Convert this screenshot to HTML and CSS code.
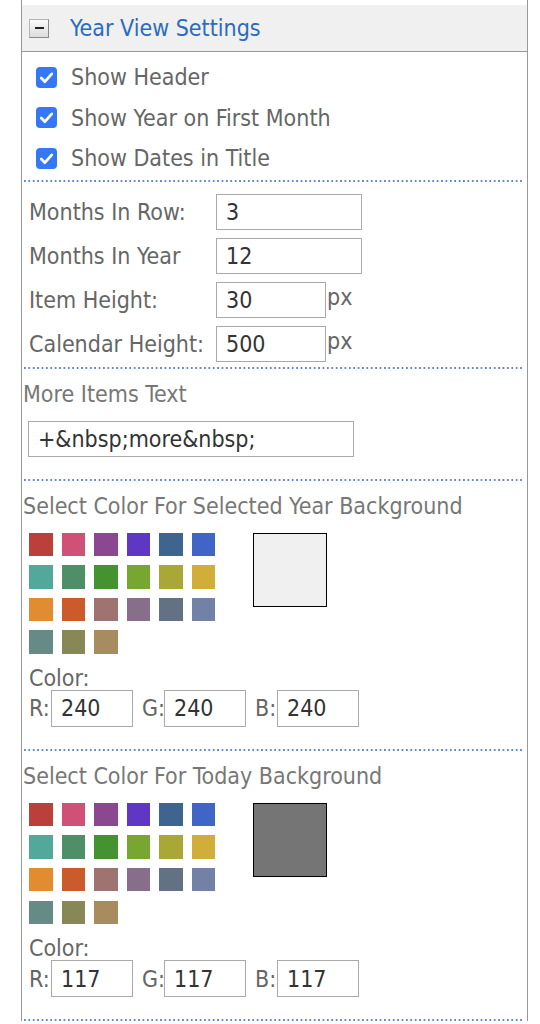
FILE: index.html
```html
<!DOCTYPE html>
<html>
<head>
    <title>Year View Settings</title>
    <link rel="stylesheet" href="styles.css">
</head>
<body>
<div class="panel">
    <div class="header">
        <span class="toggle"><span class="minus"></span></span>
        <span class="title">Year View Settings</span>
    </div>

    <div class="checks">
        <label class="check-row">
            <span class="checkbox"><svg viewBox="0 0 20 20" width="21" height="21"><path d="M5 10.5 L8.5 14 L15 6.5" fill="none" stroke="#fff" stroke-width="2.6" stroke-linecap="round" stroke-linejoin="round"/></svg></span>
            Show Header
        </label>
        <label class="check-row">
            <span class="checkbox"><svg viewBox="0 0 20 20" width="21" height="21"><path d="M5 10.5 L8.5 14 L15 6.5" fill="none" stroke="#fff" stroke-width="2.6" stroke-linecap="round" stroke-linejoin="round"/></svg></span>
            Show Year on First Month
        </label>
        <label class="check-row">
            <span class="checkbox"><svg viewBox="0 0 20 20" width="21" height="21"><path d="M5 10.5 L8.5 14 L15 6.5" fill="none" stroke="#fff" stroke-width="2.6" stroke-linecap="round" stroke-linejoin="round"/></svg></span>
            Show Dates in Title
        </label>
    </div>
    <div class="sep"></div>

    <div class="form">
        <div class="label">Months In Row:</div>
        <div><input class="text wide" type="text" value="3"></div>
        <div class="label">Months In Year</div>
        <div><input class="text wide" type="text" value="12"></div>
        <div class="label">Item Height:</div>
        <div class="with-unit"><input class="text short" type="text" value="30"><span class="unit">px</span></div>
        <div class="label">Calendar Height:</div>
        <div class="with-unit"><input class="text short" type="text" value="500"><span class="unit">px</span></div>
    </div>
    <div class="sep"></div>

    <div class="section">
        <div class="section-title">More Items Text</div>
        <input class="text more" type="text" value="+&amp;nbsp;more&amp;nbsp;">
    </div>
    <div class="sep"></div>

    <div class="section">
        <div class="section-title">Select Color For Selected Year Background</div>
        <div class="picker">
            <div class="swatches">
                <span class="sw c1"></span><span class="sw c2"></span><span class="sw c3"></span><span class="sw c4"></span><span class="sw c5"></span><span class="sw c6"></span>
                <span class="sw c7"></span><span class="sw c8"></span><span class="sw c9"></span><span class="sw c10"></span><span class="sw c11"></span><span class="sw c12"></span>
                <span class="sw c13"></span><span class="sw c14"></span><span class="sw c15"></span><span class="sw c16"></span><span class="sw c17"></span><span class="sw c18"></span>
                <span class="sw c19"></span><span class="sw c20"></span><span class="sw c21"></span>
            </div>
            <div class="preview" style="background: rgb(240,240,240)"></div>
        </div>
        <div class="color-label">Color:</div>
        <div class="rgb">
            <span class="ch">R:</span><input class="text num" type="text" value="240">
            <span class="ch">G:</span><input class="text num" type="text" value="240">
            <span class="ch">B:</span><input class="text num" type="text" value="240">
        </div>
    </div>
    <div class="sep"></div>

    <div class="section">
        <div class="section-title">Select Color For Today Background</div>
        <div class="picker">
            <div class="swatches">
                <span class="sw c1"></span><span class="sw c2"></span><span class="sw c3"></span><span class="sw c4"></span><span class="sw c5"></span><span class="sw c6"></span>
                <span class="sw c7"></span><span class="sw c8"></span><span class="sw c9"></span><span class="sw c10"></span><span class="sw c11"></span><span class="sw c12"></span>
                <span class="sw c13"></span><span class="sw c14"></span><span class="sw c15"></span><span class="sw c16"></span><span class="sw c17"></span><span class="sw c18"></span>
                <span class="sw c19"></span><span class="sw c20"></span><span class="sw c21"></span>
            </div>
            <div class="preview" style="background: rgb(117,117,117)"></div>
        </div>
        <div class="color-label">Color:</div>
        <div class="rgb">
            <span class="ch">R:</span><input class="text num" type="text" value="117">
            <span class="ch">G:</span><input class="text num" type="text" value="117">
            <span class="ch">B:</span><input class="text num" type="text" value="117">
        </div>
    </div>
    <div class="sep"></div>
</div>
</body>
</html>
```

FILE: styles.css
```css
* {
    margin: 0;
    box-sizing: border-box;
}

body {
    font-family: "DejaVu Sans Condensed", "DejaVu Sans", sans-serif;
    font-stretch: condensed;
    font-size: 23px;
    color: #666;
    background: #fff;
}

.panel {
    margin-left: 21px;
    width: 507px;
    padding-top: 5px;
    border-left: 1.5px solid #999;
    border-right: 1.5px solid #999;
}

.header {
    height: 47px;
    background: #f0f0f0;
    border-bottom: 1px solid #999;
    display: flex;
    align-items: center;
    padding-left: 7px;
}

.toggle {
    width: 20px;
    height: 19px;
    border: 1.5px solid #8a8a8a;
    border-top-color: #b5b5b5;
    border-left-color: #b5b5b5;
    background: linear-gradient(#fafafa, #dcdcdc);
    display: flex;
    align-items: center;
    justify-content: center;
}

.minus {
    width: 9px;
    height: 2.5px;
    background: #222;
}

.title {
    margin-left: 21px;
    color: #2b6bbf;
}

.checks {
    padding: 5px 0 1px 14px;
}

.check-row {
    height: 40.5px;
    display: flex;
    align-items: center;
}

.checkbox {
    width: 21px;
    height: 21px;
    border-radius: 4px;
    background: #3478f6;
    margin-right: 14px;
    display: flex;
}

.sep {
    height: 2px;
    background-image: linear-gradient(to right, #5f86d6 50%, transparent 50%);
    background-size: 4.4px 2px;
    margin: 0 5px 0 2px;
}

.form {
    display: grid;
    grid-template-columns: 187px auto;
    row-gap: 8px;
    align-items: center;
    padding: 12px 0 5px 7px;
}

.label {
    line-height: 36px;
}

.text {
    height: 36px;
    border: 1.5px solid #aaa;
    padding: 0 0 0 9px;
    font-family: inherit;
    font-stretch: condensed;
    font-size: 23px;
    color: #333;
    background: #fff;
    outline: none;
}

.wide {
    width: 146px;
}

.short {
    width: 110px;
}

.with-unit {
    display: flex;
    align-items: flex-start;
}

.unit {
    line-height: 30px;
    margin-left: 1px;
}

.section {
    padding: 11px 0 22px 1px;
}

.section-title {
    color: #777;
    line-height: 28px;
}

.more {
    margin: 13px 0 0 5px;
    width: 326px;
}

.picker {
    display: flex;
    align-items: flex-start;
    padding: 13px 0 0 6px;
}

.swatches {
    display: grid;
    grid-template-columns: repeat(6, 23.5px);
    grid-auto-rows: 23.5px;
    column-gap: 9.1px;
    row-gap: 9.1px;
    width: 187px;
}

.preview {
    width: 74px;
    height: 74px;
    border: 1.5px solid #000;
    margin-left: 37px;
}

.color-label {
    padding-left: 6px;
    margin-top: 10px;
    line-height: 28px;
}

.rgb {
    display: flex;
    align-items: center;
    padding-left: 6px;
    margin-top: -2px;
}

.ch {
    width: 22px;
}

.num {
    width: 82px;
    height: 37px;
    margin-right: 9px;
}

.c1 { background: #bb3f3a; }
.c2 { background: #cf5178; }
.c3 { background: #8b4890; }
.c4 { background: #5e37c4; }
.c5 { background: #3e6490; }
.c6 { background: #3f66c7; }
.c7 { background: #52a89a; }
.c8 { background: #4e8f68; }
.c9 { background: #459330; }
.c10 { background: #78a731; }
.c11 { background: #a9a836; }
.c12 { background: #d1ae3a; }
.c13 { background: #e18c31; }
.c14 { background: #cc5b2b; }
.c15 { background: #9e7370; }
.c16 { background: #876e8a; }
.c17 { background: #637184; }
.c18 { background: #7281a6; }
.c19 { background: #668b86; }
.c20 { background: #878856; }
.c21 { background: #a98b60; }
```
